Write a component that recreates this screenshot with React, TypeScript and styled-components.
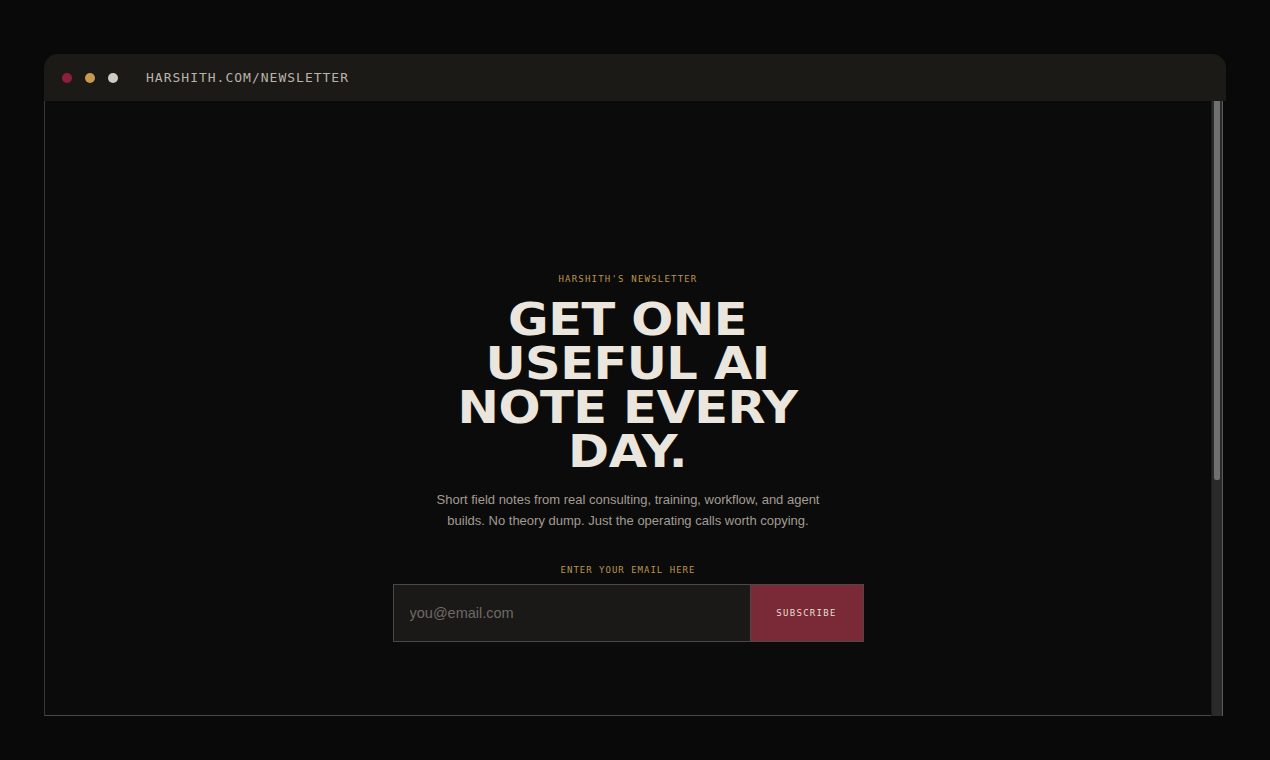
import styled, { createGlobalStyle } from "styled-components";

const GlobalStyle = createGlobalStyle`
    * {
        box-sizing: border-box;
    }
    html, body {
        margin: 0;
        padding: 0;
        background: #0a0909;
    }
    body {
        font-family: "Liberation Sans", Arial, sans-serif;
    }
`

const dots = ["#8e1f3c", "#c99a4c", "#cfccc2"]

const App = () => {
    return <>
        <GlobalStyle/>
        <StyledPage>
            <StyledWindow>
                <StyledTitleBar>
                    <StyledDots>
                        {dots.map(color => <StyledDot key={color} $color={color}/>)}
                    </StyledDots>
                    <StyledUrl>HARSHITH.COM/NEWSLETTER</StyledUrl>
                </StyledTitleBar>
                <StyledBody>
                    <StyledViewport>
                        <StyledHero>
                            <StyledEyebrow>HARSHITH'S NEWSLETTER</StyledEyebrow>
                            <StyledHeading>
                                GET ONE<br/>USEFUL AI<br/>NOTE EVERY<br/>DAY.
                            </StyledHeading>
                            <StyledLead>
                                Short field notes from real consulting, training, workflow, and agent builds. No
                                theory dump. Just the operating calls worth copying.
                            </StyledLead>
                            <StyledFormLabel htmlFor="email">ENTER YOUR EMAIL HERE</StyledFormLabel>
                            <StyledForm onSubmit={e => e.preventDefault()}>
                                <StyledInput id="email" type="email" placeholder="you@email.com"/>
                                <StyledButton type="submit">SUBSCRIBE</StyledButton>
                            </StyledForm>
                        </StyledHero>
                    </StyledViewport>
                    <StyledScrollTrack>
                        <StyledScrollThumb/>
                    </StyledScrollTrack>
                </StyledBody>
            </StyledWindow>
        </StyledPage>
    </>
}

const StyledPage = styled.div`
    width: 100%;
    height: 760px;
    padding: 54px 44px 0;
    background: #0a0909;
`

const StyledWindow = styled.div`
    width: 100%;
    height: 662px;
    display: flex;
    flex-direction: column;
    border-radius: 14px 14px 0 0;
    overflow: hidden;
`

const StyledTitleBar = styled.div`
    height: 47px;
    flex-shrink: 0;
    display: flex;
    align-items: center;
    padding-left: 18px;
    background: #1c1a17;
`

const StyledDots = styled.div`
    display: flex;
    gap: 13px;
`

const StyledDot = styled.span<{ $color: string }>`
    width: 10px;
    height: 10px;
    border-radius: 50%;
    background: ${props => props.$color};
`

const StyledUrl = styled.span`
    margin-left: 28px;
    font-family: "DejaVu Sans Mono", "Liberation Mono", monospace;
    font-size: 13px;
    letter-spacing: 1px;
    color: #b9b3a9;
`

const StyledBody = styled.div`
    flex: 1;
    display: flex;
    min-height: 0;
`

const StyledViewport = styled.div`
    flex: 1;
    overflow: hidden;
    background: #0c0b0b;
    border-left: 1px solid #3b3936;
    border-bottom: 1px solid #4a4845;
`

const StyledScrollTrack = styled.div`
    width: 15px;
    flex-shrink: 0;
    padding: 0 2px 0 2px;
    background: #2a2a2a;
    border-left: 1px solid #1c1c1c;
    border-right: 3px solid #0a0909;
    box-shadow: inset -1px 0 0 #5a5a5a;
`

const StyledScrollThumb = styled.div`
    width: 6px;
    height: 379px;
    background: #707070;
    border-radius: 0 0 2px 2px;
`

const StyledHero = styled.div`
    display: flex;
    flex-direction: column;
    align-items: center;
    padding-top: 173px;
`

const StyledEyebrow = styled.span`
    font-family: "DejaVu Sans Mono", "Liberation Mono", monospace;
    font-size: 9px;
    letter-spacing: 1.2px;
    color: #b8964b;
`

const StyledHeading = styled.h1`
    margin: 14px 0 0;
    font-family: "DejaVu Sans", "Liberation Sans", sans-serif;
    font-weight: 700;
    font-size: 45px;
    line-height: 44px;
    letter-spacing: -0.5px;
    text-align: center;
    color: #ebe6dd;
    transform: scaleX(1.1);
`

const StyledLead = styled.p`
    margin: 15px 0 0;
    max-width: 390px;
    font-family: "Liberation Sans", Arial, sans-serif;
    font-size: 13px;
    line-height: 21px;
    text-align: center;
    color: #a29c93;
`

const StyledFormLabel = styled.label`
    margin-top: 34px;
    font-family: "DejaVu Sans Mono", "Liberation Mono", monospace;
    font-size: 9px;
    letter-spacing: 1px;
    color: #b8964b;
`

const StyledForm = styled.form`
    margin-top: 9px;
    width: 471px;
    height: 58px;
    display: flex;
    border: 1px solid #4b4845;
`

const StyledInput = styled.input`
    flex: 1;
    min-width: 0;
    height: 100%;
    padding: 0 16px;
    border: none;
    border-right: 1px solid #4b4845;
    outline: none;
    background: #1a1918;
    font-family: "Liberation Sans", Arial, sans-serif;
    font-size: 14.5px;
    color: #ddd6cc;

    &::placeholder {
        color: #6f6a64;
    }
`

const StyledButton = styled.button`
    width: 112px;
    height: 100%;
    border: none;
    background: #7a2a36;
    font-family: "DejaVu Sans Mono", "Liberation Mono", monospace;
    font-size: 9px;
    letter-spacing: 1.3px;
    color: #e4dcd3;
    cursor: pointer;
`

export default App
